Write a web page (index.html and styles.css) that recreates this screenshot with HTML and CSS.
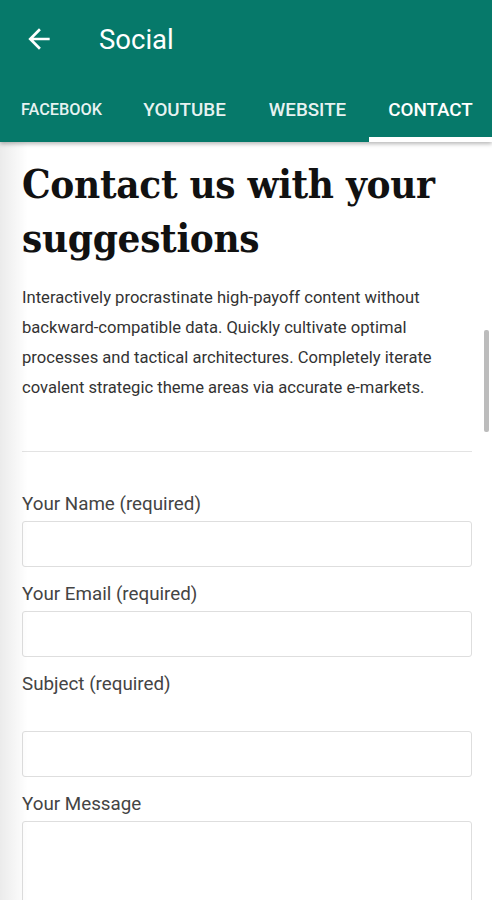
FILE: index.html
```html
<!DOCTYPE html>
<html lang="en">
<head>
<meta charset="utf-8">
<title>Social - Contact</title>
<link rel="stylesheet" href="styles.css">
</head>
<body>
<header class="appbar">
  <div class="toolbar">
    <button class="back" aria-label="Back">
      <svg width="32" height="32" viewBox="0 0 24 24"><path d="M20 11H7.83l5.59-5.59L12 4l-8 8 8 8 1.41-1.41L7.83 13H20v-2z" fill="#fff"/></svg>
    </button>
    <h1 class="title">Social</h1>
  </div>
  <nav class="tabs">
    <a class="tab tab-small">FACEBOOK</a>
    <a class="tab">YOUTUBE</a>
    <a class="tab">WEBSITE</a>
    <a class="tab active">CONTACT</a>
  </nav>
</header>
<main class="content">
  <h2 class="heading">Contact us with your suggestions</h2>
  <p class="intro">Interactively procrastinate high-payoff content without backward-compatible data. Quickly cultivate optimal processes and tactical architectures. Completely iterate covalent strategic theme areas via accurate e-markets.</p>
  <hr class="divider">
  <form class="form">
    <label class="label">Your Name (required)</label>
    <input class="field" type="text">
    <label class="label">Your Email (required)</label>
    <input class="field" type="email">
    <label class="label label-gap">Subject (required)</label>
    <input class="field" type="text">
    <label class="label">Your Message</label>
    <textarea class="field area"></textarea>
  </form>
</main>
<div class="edge-shade"></div>
<div class="scrollbar"></div>
</body>
</html>
```
FILE: styles.css
```css
* { box-sizing: border-box; }
html, body { margin: 0; padding: 0; }
body {
  font-family: Roboto, "Noto Sans", sans-serif;
  background: #fff;
  width: 492px;
  height: 900px;
  overflow: hidden;
  position: relative;
}
.appbar {
  background: #06796a;
  color: #fff;
  box-shadow: 0 2px 4px rgba(0,0,0,0.28);
  position: relative;
  z-index: 2;
}
.toolbar {
  height: 72px;
  display: flex;
  align-items: center;
  padding: 6px 0 0 23px;
}
.back {
  background: none;
  border: 0;
  padding: 0;
  width: 32px;
  height: 32px;
  display: flex;
}
.title {
  margin: 0 0 0 44px;
  font-weight: 400;
  font-size: 27.5px;
  letter-spacing: 0;
}
.tabs {
  display: grid;
  grid-template-columns: repeat(4, 1fr);
  height: 70px;
}
.tab {
  display: flex;
  align-items: center;
  justify-content: center;
  font-size: 18.8px;
  font-weight: 500;
  color: rgba(255,255,255,0.92);
  padding-top: 10px;
  border-bottom: 5px solid transparent;
}
.tab-small { font-size: 16.3px; }
.tab.active {
  color: #fff;
  border-bottom-color: #fff;
}
.content {
  padding: 15px 20px 0 22px;
}
.heading {
  font-family: "DejaVu Serif Condensed", "DejaVu Serif", serif;
  font-weight: 700;
  font-size: 40px;
  line-height: 54px;
  color: #111;
  margin: 0 0 18px;
  letter-spacing: -0.3px;
}
.intro {
  font-size: 16.6px;
  line-height: 30px;
  color: #333;
  margin: 0;
}
.divider {
  border: 0;
  border-top: 1px solid #e3e3e3;
  margin: 48px 0 40px;
}
.form {
  display: flex;
  flex-direction: column;
}
.label {
  font-size: 18.8px;
  line-height: 24px;
  color: #444;
  margin-bottom: 5px;
}
.label-gap { margin-bottom: 35px; }
.field {
  height: 46px;
  border: 1px solid #dedede;
  border-radius: 3px;
  background: #fff;
  margin: 0 0 15px;
  font: inherit;
}
.area { height: 140px; resize: none; }
.edge-shade {
  position: absolute;
  left: 0;
  top: 142px;
  bottom: 0;
  width: 28px;
  background: linear-gradient(to right, rgba(0,0,0,0.08), rgba(0,0,0,0));
  pointer-events: none;
}
.scrollbar {
  position: absolute;
  left: 484px;
  top: 330px;
  width: 5px;
  height: 102px;
  background: #bcbcbc;
  border-radius: 2px;
}
```
